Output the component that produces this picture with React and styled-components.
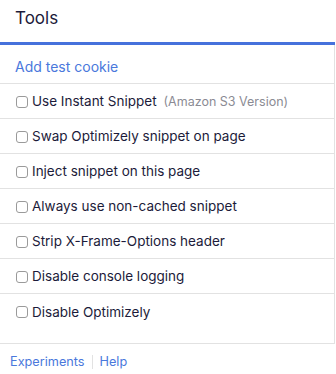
import React from 'react';
import styled, { createGlobalStyle } from 'styled-components';

const Global = createGlobalStyle`
    body {
        margin: 0;
        background: #fff;
        font-family: Inter, 'Noto Sans', sans-serif;
        color: #1c1b3a;
    }
`;

const Panel = styled.div`
    width: 335px;
`;

const Header = styled.div`
    height: 45px;
    padding: 0 0 6px 15px;
    display: flex;
    align-items: center;
    font-size: 17px;
    color: #1c1b3a;
    border-bottom: 3px solid #4671dc;
    box-sizing: border-box;
`;

const Body = styled.div`
    border-right: 1px solid #e2e2e2;
    border-bottom: 1px solid #e2e2e2;
    padding-bottom: 14px;
`;

const LinkRow = styled.div`
    height: 39px;
    display: flex;
    align-items: center;
    padding: 5px 0 0 15px;
    border-bottom: 1px solid #e2e2e2;
    font-size: 14px;
    color: #4a78dc;
    box-sizing: border-box;
`;

const Row = styled.label`
    height: 35px;
    display: flex;
    align-items: center;
    padding-left: 16px;
    border-bottom: ${({ $last }) => ($last ? 'none' : '1px solid #e2e2e2')};
    box-sizing: border-box;
    font-size: 13.5px;
    color: #1c1b3a;
    gap: 4px;
`;

const Box = styled.span`
    width: 10px;
    height: 10px;
    border: 1px solid #9a9a9a;
    border-radius: 3px;
    flex-shrink: 0;
    margin-top: 1px;
`;

const Note = styled.span`
    color: #8b8b94;
    font-size: 12.5px;
    margin-left: 3px;
`;

const Footer = styled.div`
    display: flex;
    align-items: center;
    padding: 10px 10px;
    font-size: 12.7px;
`;

const FootLink = styled.span`
    color: #4a78dc;
`;

const Sep = styled.span`
    width: 1px;
    height: 14px;
    background: #e2e2e2;
    margin: 0 7px;
`;

const options = [
    { label: 'Use Instant Snippet', note: '(Amazon S3 Version)' },
    { label: 'Swap Optimizely snippet on page' },
    { label: 'Inject snippet on this page' },
    { label: 'Always use non-cached snippet' },
    { label: 'Strip X-Frame-Options header' },
    { label: 'Disable console logging' },
    { label: 'Disable Optimizely' },
];

export default function App() {
    return (
        <>
            <Global />
            <Panel>
                <Header>Tools</Header>
                <Body>
                    <LinkRow>Add test cookie</LinkRow>
                    {options.map((o, i) => (
                        <Row key={o.label} $last={i === options.length - 1}>
                            <Box />
                            <span>{o.label}</span>
                            {o.note && <Note>{o.note}</Note>}
                        </Row>
                    ))}
                </Body>
            </Panel>
            <Footer>
                <FootLink>Experiments</FootLink>
                <Sep />
                <FootLink>Help</FootLink>
            </Footer>
        </>
    );
}
